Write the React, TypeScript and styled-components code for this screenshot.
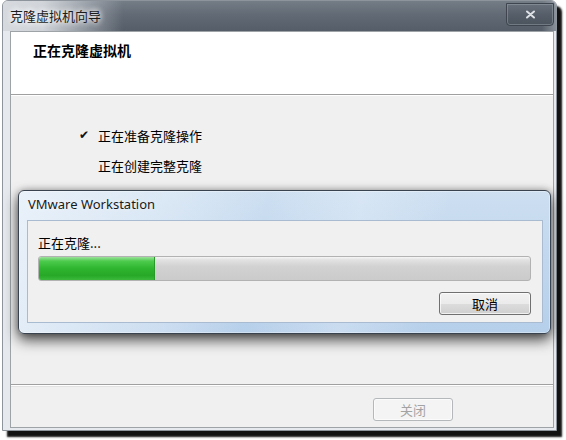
import React from "react";
import styled, { createGlobalStyle } from "styled-components";

const GlobalStyle = createGlobalStyle`
  html, body { margin: 0; padding: 0; background: #ffffff; }
  body { font-family: "Noto Sans", "Noto Sans CJK SC", sans-serif; }
`;

const CJK = `"Noto Sans CJK SC", "Noto Sans", sans-serif`;
const LATIN = `"Noto Sans", "Noto Sans CJK SC", sans-serif`;

const Stage = styled.div`
  position: relative;
  width: 566px;
  height: 440px;
  overflow: hidden;
  background: #ffffff;
`;

const Window = styled.div`
  margin-left: 2px;
  width: 553px;
  height: 429px;
  border: 1px solid #8e949b;
  border-radius: 6px 6px 0 0;
  background: #e6eaee;
  display: flex;
  flex-direction: column;
  box-shadow: 5px 6px 2px #121212;
`;

const TitleBar = styled.div`
  height: 30px;
  flex: none;
  display: flex;
  align-items: flex-start;
  justify-content: space-between;
  padding: 0 2px 0 7px;
  border-radius: 5px 5px 0 0;
  background:
    linear-gradient(to right, rgba(214, 218, 223, 1) 0, rgba(214, 218, 223, 0.95) 40px, rgba(214, 218, 223, 0) 120px),
    linear-gradient(to left, rgba(150, 157, 165, 0.8) 0, rgba(150, 157, 165, 0) 14px),
    linear-gradient(#747c86 0, #626a75 45%, #555d68 100%);
`;

const TitleText = styled.span`
  font-family: ${CJK};
  font-size: 13px;
  line-height: 30px;
  color: #1c1c1c;
  text-shadow: 0 0 6px #ffffff, 0 0 6px #ffffff;
`;

const CloseButton = styled.div`
  margin-top: 2px;
  width: 46px;
  height: 21px;
  border: 1px solid #3e454e;
  border-radius: 0 0 4px 4px;
  box-shadow: inset 0 0 0 1px rgba(160, 168, 176, 0.45);
  background: linear-gradient(#68707b 0, #565e69 50%, #4b535d 100%);
  display: flex;
  align-items: center;
  justify-content: center;
`;

const Client = styled.div`
  flex: 1;
  margin: 0 2px 2px 7px;
  border: 1px solid #9ea3a8;
  background: #f0f0f0;
  display: flex;
  flex-direction: column;
`;

const Header = styled.div`
  height: 63px;
  flex: none;
  background: #ffffff;
  padding: 10px 0 0 22px;
  box-sizing: border-box;
  border-bottom: 1px solid #a0a0a0;
  box-shadow: 0 1px 0 #ffffff;
`;

const HeaderTitle = styled.div`
  font-family: ${CJK};
  font-weight: 700;
  font-size: 14px;
  line-height: 16px;
  color: #000000;
`;

const Body = styled.div`
  flex: 1;
  padding: 30px 0 0 68px;
  display: flex;
  flex-direction: column;
  gap: 10px;
`;

const Step = styled.div`
  display: flex;
  align-items: center;
  height: 20px;
`;

const StepMark = styled.span`
  width: 19px;
  flex: none;
  font-family: "DejaVu Sans", sans-serif;
  font-size: 12px;
  font-weight: 700;
  color: #111111;
`;

const StepText = styled.span`
  font-family: ${CJK};
  font-size: 13px;
  color: #000000;
`;

const Footer = styled.div`
  height: 43px;
  flex: none;
  border-top: 1px solid #a0a0a0;
  box-shadow: inset 0 1px 0 #ffffff, inset 0 2px 0 #e2e2e2;
  display: flex;
  justify-content: flex-end;
  padding: 13px 100px 0 0;
  box-sizing: border-box;
`;

const PushButton = styled.button<{ $disabled?: boolean; $width: number }>`
  width: ${(p) => p.$width}px;
  height: 23px;
  padding: 0;
  border-radius: 3px;
  font-family: ${CJK};
  font-size: 13px;
  line-height: 21px;
  cursor: default;
  border: 1px solid ${(p) => (p.$disabled ? "#b4b8bb" : "#707070")};
  color: ${(p) => (p.$disabled ? "#a3a3a3" : "#000000")};
  background: ${(p) =>
    p.$disabled
      ? "#f4f4f4"
      : "linear-gradient(#f2f2f2 0, #ebebeb 50%, #dddddd 50%, #cfcfcf 100%)"};
  box-shadow: inset 0 0 0 1px ${(p) => (p.$disabled ? "#fbfbfb" : "rgba(255,255,255,0.7)")};
`;

const Dialog = styled.div`
  position: absolute;
  left: 18px;
  top: 190px;
  width: 533px;
  height: 144px;
  border: 1px solid #39434f;
  border-radius: 6px;
  padding: 0 7px 10px 8px;
  box-sizing: border-box;
  display: flex;
  flex-direction: column;
  background:
    linear-gradient(100deg, rgba(236, 243, 250, 0.9) 0, rgba(236, 243, 250, 0.4) 30%, rgba(236, 243, 250, 0) 45%, rgba(236, 243, 250, 0.35) 62%, rgba(236, 243, 250, 0) 78%),
    linear-gradient(#cddff1 0, #bed5ed 60%, #b6cfea 100%);
  box-shadow: 0 0 0 1px rgba(255, 255, 255, 0.35) inset, 0 6px 14px rgba(0, 0, 0, 0.7), 0 0 6px rgba(0, 0, 0, 0.25);
`;

const DialogTitle = styled.div`
  height: 29px;
  flex: none;
  padding-left: 1px;
  font-family: ${LATIN};
  font-size: 13px;
  line-height: 27px;
  color: #1a1a1a;
  text-shadow: 0 0 5px rgba(255, 255, 255, 0.8);
`;

const DialogClient = styled.div`
  flex: 1;
  border: 1px solid #a9bbd0;
  background: #f0f0f0;
  padding: 13px 11px 0 10px;
  display: flex;
  flex-direction: column;
`;

const Label = styled.div`
  font-family: ${CJK};
  font-size: 13px;
  line-height: 18px;
  color: #000000;
`;

const Track = styled.div`
  margin-top: 4px;
  height: 25px;
  box-sizing: border-box;
  border: 1px solid #b2b2b2;
  border-radius: 3px;
  overflow: hidden;
  background: linear-gradient(#f6f6f6 0, #e2e2e2 12%, #d2d2d2 40%, #cbcbcb 100%);
  display: flex;
`;

const Fill = styled.div`
  height: 100%;
  background: linear-gradient(#9be29b 0, #4ccb4c 18%, #2fb52f 50%, #27a927 80%, #3bb83b 100%);
  border-right: 1px solid #2a9a2a;
`;

const ButtonRow = styled.div`
  margin-top: 11px;
  display: flex;
  justify-content: flex-end;
`;

const CloseGlyph = () => (
  <svg width="11" height="9" viewBox="0 0 11 9">
    <path d="M2 1.5 L9 7.5 M9 1.5 L2 7.5" stroke="#dde1e5" strokeWidth="2" strokeLinecap="round" />
  </svg>
);

export default function App() {
  const progress = 23.5;
  return (
    <Stage>
      <GlobalStyle />
      <Window>
        <TitleBar>
          <TitleText>克隆虚拟机向导</TitleText>
          <CloseButton>
            <CloseGlyph />
          </CloseButton>
        </TitleBar>
        <Client>
          <Header>
            <HeaderTitle>正在克隆虚拟机</HeaderTitle>
          </Header>
          <Body>
            <Step>
              <StepMark>✔</StepMark>
              <StepText>正在准备克隆操作</StepText>
            </Step>
            <Step>
              <StepMark />
              <StepText>正在创建完整克隆</StepText>
            </Step>
          </Body>
          <Footer>
            <PushButton $disabled $width={80}>关闭</PushButton>
          </Footer>
        </Client>
      </Window>
      <Dialog>
        <DialogTitle>VMware Workstation</DialogTitle>
        <DialogClient>
          <Label>正在克隆...</Label>
          <Track>
            <Fill style={{ width: `${progress}%` }} />
          </Track>
          <ButtonRow>
            <PushButton $width={92}>取消</PushButton>
          </ButtonRow>
        </DialogClient>
      </Dialog>
    </Stage>
  );
}
